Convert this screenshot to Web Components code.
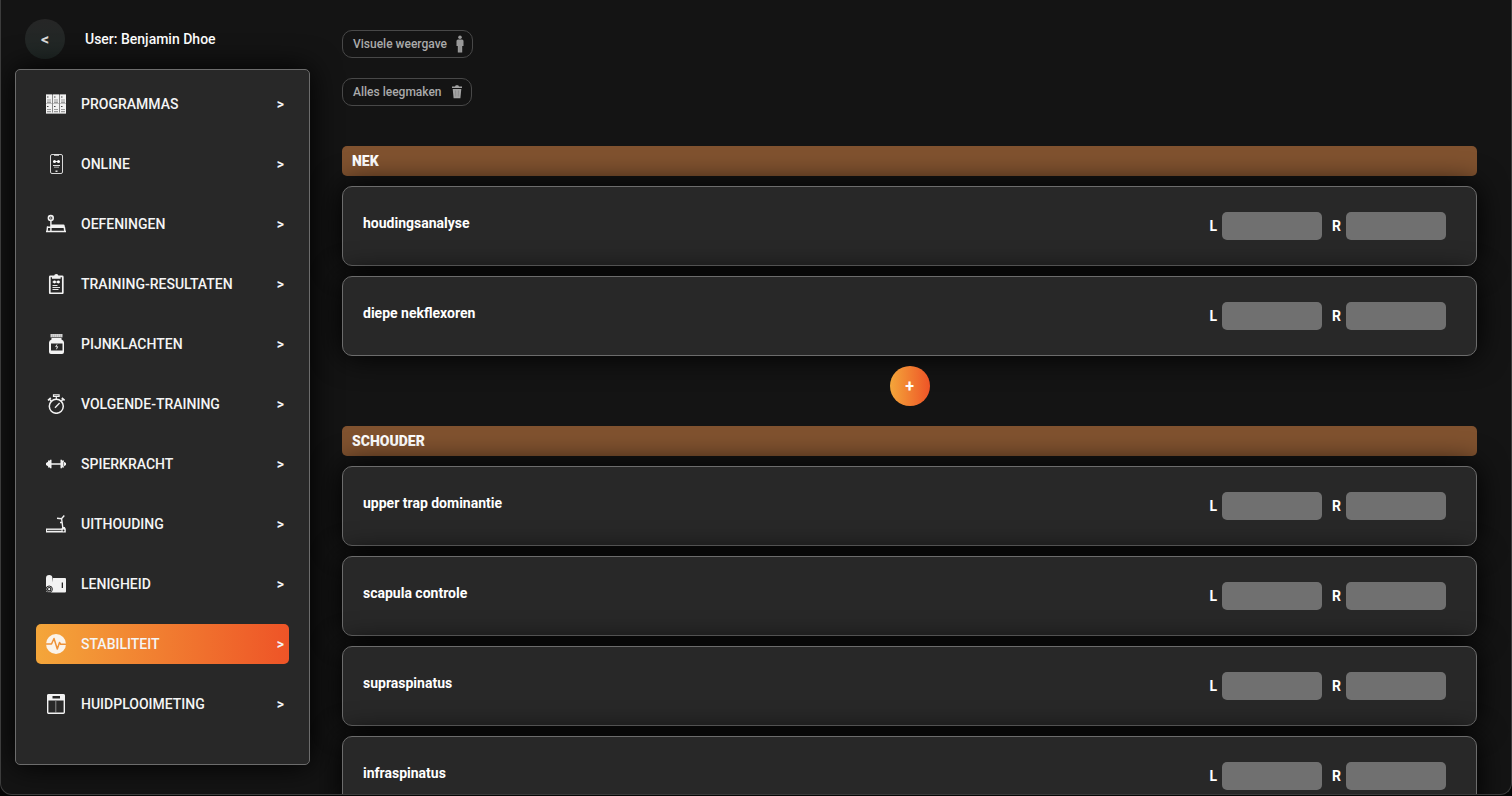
<!DOCTYPE html>
<html lang="nl">
<head>
<meta charset="utf-8">
<meta name="viewport" content="width=device-width, initial-scale=1">
<title>Stabiliteit</title>
<style>
  html, body {
    margin: 0;
    height: 100%;
    background: #050505;
  }
  body {
    font-family: Roboto, "Liberation Sans", sans-serif;
    font-size: 14px;
    line-height: 20px;
    color: #fff;
    --card: #282828;
    --line: #6c6c6c;
    --shadow: 0 0 30px #000;
    --accent: linear-gradient(90deg, #f4a63a, #ee5427);
  }
</style>
</head>
<body>
<app-shell>
  <side-menu slot="side" user="Benjamin Dhoe">
    <menu-item icon="programs">PROGRAMMAS</menu-item>
    <menu-item icon="phone">ONLINE</menu-item>
    <menu-item icon="bench">OEFENINGEN</menu-item>
    <menu-item icon="clipboard">TRAINING-RESULTATEN</menu-item>
    <menu-item icon="jar">PIJNKLACHTEN</menu-item>
    <menu-item icon="stopwatch">VOLGENDE-TRAINING</menu-item>
    <menu-item icon="dumbbell">SPIERKRACHT</menu-item>
    <menu-item icon="treadmill">UITHOUDING</menu-item>
    <menu-item icon="mat">LENIGHEID</menu-item>
    <menu-item icon="pulse" active>STABILITEIT</menu-item>
    <menu-item icon="scale">HUIDPLOOIMETING</menu-item>
  </side-menu>
  <tool-bar>
    <pill-button icon="person">Visuele weergave</pill-button>
    <pill-button icon="trash">Alles leegmaken</pill-button>
  </tool-bar>
  <muscle-group title-text="NEK">
    <test-row name="houdingsanalyse"></test-row>
    <test-row name="diepe nekflexoren"></test-row>
    <add-button></add-button>
  </muscle-group>
  <muscle-group title-text="SCHOUDER">
    <test-row name="upper trap dominantie"></test-row>
    <test-row name="scapula controle"></test-row>
    <test-row name="supraspinatus"></test-row>
    <test-row name="infraspinatus"></test-row>
  </muscle-group>
</app-shell>

<script>
// one locker of the programs icon
const cell = (x, y) => `
  <path fill="#f2f2f2" d="M${x} ${y}h6v9h-6z"/>
  <path fill="#444" d="M${x + 1} ${y + 2}h1.500v1h-1.500z"/>
  <path fill="#9a9a9a" d="M${x + 1} ${y + 5}h4v1h-4zM${x + 1} ${y + 7}h4v1.500h-4z"/>`;

// all icons are drawn on a 20x20 grid
const icons = {
  programs: `<path fill="#888" d="M0 .5h20v19H0z"/>` +
    [0, 7, 14].map(x => cell(x, 0.5) + cell(x, 10)).join('') +
    `<path fill="#f2f2f2" d="M0 18.5h20v1H0z"/>`,
  phone: `
    <rect x="4.5" y=".5" width="12" height="19" rx="1.5" fill="none" stroke="#d8d8d8"/>
    <path fill="#e0e0e0" d="M8 0h5v1.800H8zM7 11h7v1H7zM8 12.700h5v.9H8zM9.500 16.500h2v1.500h-2z"/>
    <path stroke="#e8e8e8" d="M7 7.500h7"/>
    <circle cx="8.500" cy="7.500" r="1.500" fill="#fff"/><circle cx="12.500" cy="7.500" r="1.500" fill="#fff"/>`,
  bench: `
    <circle cx="4.800" cy="4" r="2.400" fill="none" stroke="#f2f2f2" stroke-width="1.600"/>
    <circle cx="4.800" cy="4" r=".8" fill="#f2f2f2"/>
    <path fill="none" stroke="#f2f2f2" stroke-width="1.400" d="M4.900 6v11.500M1.500 12.500 1 18"/>
    <path fill="#f2f2f2" d="M5 10.500h12.500q1 0 1.200 1.200l.3 2.300H5zM0 16.700h20v1.600H0zM17.500 13h1.600l.6 4.500h-1.600zM1 12.500h4V14H1z"/>`,
  clipboard: `
    <rect x="3.800" y="2.300" width="13" height="17" rx=".6" fill="none" stroke="#f2f2f2" stroke-width="1.700"/>
    <path fill="#f2f2f2" d="M6 2.400h2Q8.300 0 10.300 0t2.300 2.400h2V4.700H6z"/>
    <path stroke="#e4e4e4" d="M6.500 8h7.500M6.500 11.500h5M6.500 13.500h7.500M6.500 15.500h6"/>
    <circle cx="8.500" cy="8" r="1.400" fill="#fff"/><circle cx="12.300" cy="8" r="1.400" fill="#fff"/>`,
  jar: `
    <path fill="#d2d2d2" d="M4.500 0h12v3.400h-12z"/>
    <path stroke="#999" stroke-width=".4" d="M6.500 .5v2.500M8.500 .5v2.500M10.500 .5v2.500M12.500 .5v2.500M14.500 .5v2.500"/>
    <path fill="#f2f2f2" d="M5.500 4h10v1.500q2.500 .8 2.500 3v9.500q0 2-2 2H5q-2 0-2-2V8.500q0-2.200 2.500-3z"/>
    <path fill="#282828" d="M5 9.500h11.500v7H5z"/>
    <path fill="none" stroke="#f2f2f2" stroke-width=".9" d="M11 10.500l-1.300 2.200h2l-1.300 2.600"/>`,
  stopwatch: `
    <circle cx="10.300" cy="12.300" r="7" fill="none" stroke="#f2f2f2" stroke-width="1.500"/>
    <path fill="none" stroke="#f2f2f2" stroke-width="1.200" d="M7.500 .8h5.600v1.700H7.500zM10.300 2.500v3"/>
    <path fill="none" stroke="#f2f2f2" stroke-width="1.600" d="M2 6.400l2.800-2.600M18.600 6.400l-2.800-2.600M3.500 5l1.700 1.900M17.100 5l-1.700 1.900"/>
    <path stroke="#f2f2f2" stroke-width="1.300" d="M9 13.800l4.600-4.800"/>`,
  dumbbell: `
    <path fill="#f2f2f2" d="M5 9.200h10v1.600H5zM4 5.800h1.500v8.400H4zM14.500 5.800H16v8.400h-1.500zM2 6.500h2.300v7H2zM15.700 6.500H18v7h-2.300zM0 9l2.500-1.500v5L0 11zM20 9l-2.500-1.500v5L20 11z"/>`,
  treadmill: `
    <path fill="none" stroke="#f2f2f2" stroke-width="1.400" d="M15.500 4l1.500 11M11 4.300l4.500 .4L18.300 1.500M14 8.500h2"/>
    <path fill="#f2f2f2" d="M0 14.500h15.500l1-1.500h2.300l1 2v3.500H0z"/>
    <path stroke="#282828" stroke-width=".9" d="M1 16.400h14.500"/>
    <circle cx="17.500" cy="16.400" r="1" fill="#282828"/>`,
  mat: `
    <path fill="#f2f2f2" d="M0 4Q0 1 3.200 1T6.400 4v14H0zM7 4h12q1 0 1 1v12.500q0 1-1 1H5z"/>
    <path fill="#282828" d="M15.700 8.500h1.300v5.500h-1.300z"/>
    <circle cx="3.200" cy="15.200" r="3.200" fill="#f2f2f2" stroke="#282828" stroke-width="1"/>
    <circle cx="3.200" cy="15.200" r="1.700" fill="#f2f2f2" stroke="#282828" stroke-width="1.200"/>`,
  pulse: `
    <circle cx="10" cy="10" r="10" fill="#fbf3e9"/>
    <path fill="none" stroke="#ee9136" stroke-width="1.500" stroke-linejoin="round" d="M0 10h5.500L8 4.500l3.300 10.500L13.500 8.500l1.200 1.700H20"/>`,
  scale: `
    <rect x="1.700" y=".7" width="16.600" height="18.600" rx="1" fill="none" stroke="#f2f2f2" stroke-width="1.400"/>
    <path fill="#f2f2f2" d="M1.500 .5h17v6h-17z"/>
    <path fill="#282828" d="M6.500 2h7.500v2.500H6.500z"/>
    <path stroke="#a5a5a5" stroke-width=".8" d="M9.800 7v12"/>`,
  person: `
    <circle cx="10" cy="3.300" r="1.800" fill="#999"/>
    <path fill="#999" d="M8 5.500h4q1.500 0 1.500 1.500v5h-1.300v6.500H7.800V12H6.500V7q0-1.500 1.500-1.500z"/>
    <path stroke="#777" stroke-width=".4" d="M10 12.500V18"/>`,
  trash: `
    <path fill="#a3a3a3" d="M5 4.500h3l.8-1.200h2.400l.8 1.200h3V6H5zM5.700 7h8.600l-.9 9.200H6.600z"/>
    <path stroke="#777" stroke-width=".5" d="M8.500 8.500l.3 6M11.500 8.500l-.3 6"/>`
};

class SvgIcon extends HTMLElement {
  constructor() {
    super();
    this.attachShadow({ mode: 'open' });
  }

  connectedCallback() {
    this.shadowRoot.innerHTML = `
      <style>
        :host { display: block; width: 20px; height: 20px; flex: none; }
        :host([name="person"]) { width: 16px; }
        svg { display: block; width: 100%; height: 100%; }
      </style>
      <svg viewBox="0 0 20 20" preserveAspectRatio="xMidYMid slice" aria-hidden="true">${icons[this.getAttribute('name')] || ''}</svg>
    `;
  }
}

class AppShell extends HTMLElement {
  constructor() {
    super();
    this.attachShadow({ mode: 'open' });
    this.shadowRoot.innerHTML = `
      <style>
        :host {
          display: flex;
          box-sizing: border-box;
          height: calc(100vh - 1px);
          background: #141414;
          border: 1px solid #3c3c3c;
          border-top: 0;
          border-radius: 0 0 12px 12px;
          overflow: hidden;
        }
        main {
          flex: 1;
          min-width: 0;
          box-sizing: border-box;
          padding: 30px 34px 0 32px;
          overflow: hidden auto;
          scrollbar-width: none;
        }
      </style>
      <slot name="side"></slot>
      <main><slot></slot></main>
    `;
  }
}

class SideMenu extends HTMLElement {
  constructor() {
    super();
    this.attachShadow({ mode: 'open' });
    this.shadowRoot.innerHTML = `
      <style>
        :host {
          display: flex;
          flex-direction: column;
          flex: none;
          box-sizing: border-box;
          width: 309px;
          padding: 19px 0 29px 14px;
        }
        header {
          display: flex;
          align-items: center;
          gap: 20px;
          padding: 0 10px 10px;
          font-weight: 500;
        }
        button {
          width: 40px;
          height: 40px;
          padding: 0;
          border: 0;
          border-radius: 50%;
          background: linear-gradient(#262626, #202826);
          color: #ddd;
          font: bold 16px Roboto, sans-serif;
        }
        nav {
          flex: 1;
          display: flex;
          flex-direction: column;
          gap: 20px;
          padding: 14px 20px;
          background: var(--card);
          border: 1px solid var(--line);
          border-radius: 5px;
          box-shadow: var(--shadow);
        }
      </style>
      <header>
        <button type="button" aria-label="Terug">&lt;</button>
        <span></span>
      </header>
      <nav><slot></slot></nav>
    `;
  }

  connectedCallback() {
    this.shadowRoot.querySelector('span').textContent = 'User: ' + this.getAttribute('user');
  }
}

class MenuItem extends HTMLElement {
  constructor() {
    super();
    this.attachShadow({ mode: 'open' });
  }

  connectedCallback() {
    this.shadowRoot.innerHTML = `
      <style>
        :host { display: block; }
        a {
          display: flex;
          align-items: center;
          gap: 15px;
          height: 40px;
          padding: 0 5px 0 10px;
          border-radius: 5px;
          color: #f5f5f5;
          font-weight: 500;
          text-decoration: none;
        }
        :host([active]) a { background: var(--accent); }
        .label { flex: 1; }
        .arrow { font-weight: bold; }
      </style>
      <a href="#">
        <svg-icon name="${this.getAttribute('icon')}"></svg-icon>
        <span class="label"><slot></slot></span>
        <span class="arrow">&gt;</span>
      </a>
    `;
  }
}

class ToolBar extends HTMLElement {
  constructor() {
    super();
    this.attachShadow({ mode: 'open' });
    this.shadowRoot.innerHTML = `
      <style>
        :host {
          display: flex;
          flex-direction: column;
          align-items: flex-start;
          gap: 20px;
          margin-bottom: 40px;
        }
      </style>
      <slot></slot>
    `;
  }
}

class PillButton extends HTMLElement {
  constructor() {
    super();
    this.attachShadow({ mode: 'open' });
  }

  connectedCallback() {
    this.shadowRoot.innerHTML = `
      <style>
        :host { display: block; }
        button {
          display: flex;
          align-items: center;
          gap: 5px;
          height: 28px;
          padding: 0 4px 0 10px;
          border: 1px solid #484848;
          border-radius: 10px;
          background: transparent;
          color: #aaa;
          font: 500 12px Roboto, sans-serif;
        }
      </style>
      <button type="button"><slot></slot><svg-icon name="${this.getAttribute('icon')}"></svg-icon></button>
    `;
  }
}

class MuscleGroup extends HTMLElement {
  constructor() {
    super();
    this.attachShadow({ mode: 'open' });
    this.shadowRoot.innerHTML = `
      <style>
        :host {
          display: flex;
          flex-direction: column;
          gap: 10px;
          margin-bottom: 20px;
        }
        h2 {
          margin: 0;
          padding: 5px 10px;
          border-radius: 5px;
          background: #80522f;
          font-size: 14px;
          line-height: 20px;
          font-weight: 900;
        }
      </style>
      <h2></h2>
      <slot></slot>
    `;
  }

  connectedCallback() {
    this.shadowRoot.querySelector('h2').textContent = this.getAttribute('title-text');
  }
}

class AddButton extends HTMLElement {
  constructor() {
    super();
    this.attachShadow({ mode: 'open' });
    this.shadowRoot.innerHTML = `
      <style>
        :host { display: block; align-self: center; }
        button {
          display: block;
          width: 40px;
          height: 40px;
          padding: 0;
          border: 0;
          border-radius: 50%;
          background: var(--accent);
          color: #fff;
          font: bold 16px Roboto, sans-serif;
        }
      </style>
      <button type="button" aria-label="Test toevoegen">+</button>
    `;
  }
}

class TestRow extends HTMLElement {
  constructor() {
    super();
    this.attachShadow({ mode: 'open' });
    this.shadowRoot.innerHTML = `
      <style>
        :host {
          display: flex;
          align-items: center;
          gap: 10px;
          box-sizing: border-box;
          height: 80px;
          padding: 0 30px 0 20px;
          background: var(--card);
          border: 1px solid var(--line);
          border-radius: 10px;
          box-shadow: var(--shadow);
          font-weight: bold;
        }
        .name { flex: 1; padding-bottom: 6px; }
        .side { display: flex; align-items: center; gap: 5px; }
        input {
          box-sizing: border-box;
          width: 100px;
          height: 28px;
          padding: 0 10px;
          border: 0;
          border-radius: 5px;
          background: #707070;
          color: #fff;
          font: inherit;
        }
      </style>
      <span class="name"></span>
      <div class="side"><label for="left">L</label><input id="left" type="text"></div>
      <div class="side"><label for="right">R</label><input id="right" type="text"></div>
    `;
  }

  connectedCallback() {
    this.shadowRoot.querySelector('.name').textContent = this.getAttribute('name');
  }
}

customElements.define('svg-icon', SvgIcon);
customElements.define('app-shell', AppShell);
customElements.define('side-menu', SideMenu);
customElements.define('menu-item', MenuItem);
customElements.define('tool-bar', ToolBar);
customElements.define('pill-button', PillButton);
customElements.define('muscle-group', MuscleGroup);
customElements.define('add-button', AddButton);
customElements.define('test-row', TestRow);
</script>
</body>
</html>
